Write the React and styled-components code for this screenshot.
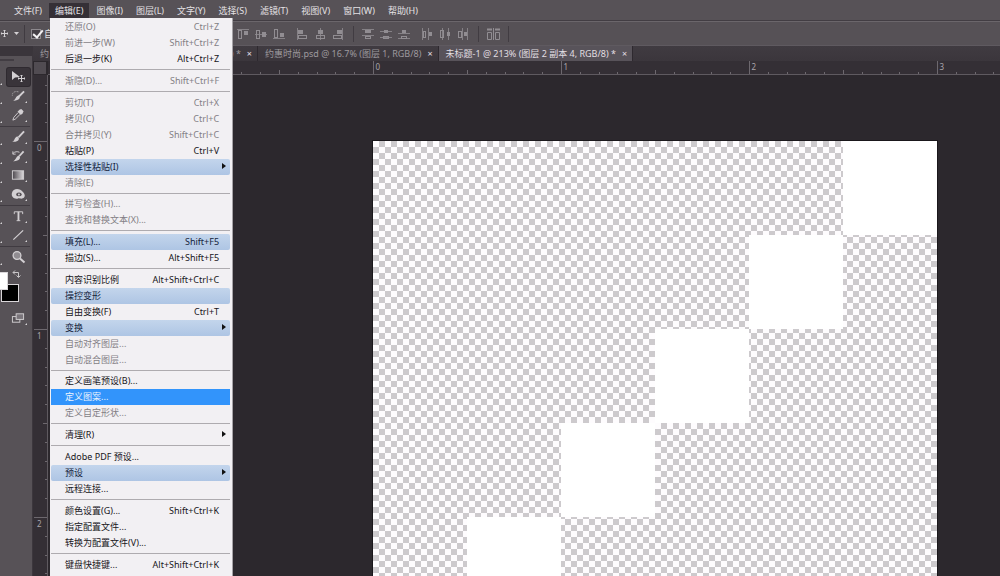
import React, { useEffect, useState } from 'react'
import styled, { createGlobalStyle, css } from 'styled-components'

const GlobalStyle = createGlobalStyle`
    * { box-sizing: border-box; }
    body {
        margin: 0;
        overflow: hidden;
        background-color: #2c282d;
        font-family: "Noto Sans", "Noto Sans CJK SC", sans-serif;
        font-size: 9px;
    }
    button {
        font: inherit;
        color: inherit;
        border: 0;
        padding: 0;
        background: none;
        text-align: left;
        white-space: nowrap;
    }
    svg { display: block; }
`

const Window = styled.div`
    display: flex;
    flex-direction: column;
    height: 100vh;
    overflow: hidden;
    color: #e4e1e4;
`

/* ---------- menu bar ---------- */

const MenuBar = styled.nav`
    display: flex;
    align-items: flex-start;
    gap: 1px;
    flex: none;
    height: 21px;
    padding: 3px 8px 0;
    background-color: #575257;
    border-bottom: 1px solid #423d43;
`

const MenuSlot = styled.div`
    position: relative;
`

const MenuTitle = styled.button`
    display: block;
    height: 15px;
    line-height: 15px;
    padding: 0 6px;
    font-size: 9px;
    background-color: ${({ $open }) => ($open ? '#353036' : 'transparent')};
`

const Dropdown = styled.ul`
    position: absolute;
    z-index: 10;
    top: 15px;
    left: 1px;
    width: 183px;
    margin: 0;
    padding: 1px 2px 8px 1px;
    list-style: none;
    background-color: #f2f0f3;
    border-right: 1px solid #a5a2a6;
`

const Divider = styled.li`
    height: ${({ $tight }) => ($tight ? '5px' : '6px')};
    padding-top: 2px;
    &::after {
        content: "";
        display: block;
        height: 1px;
        background-color: #aeabaf;
    }
`

const MenuRow = styled.button`
    display: flex;
    align-items: center;
    justify-content: space-between;
    width: 100%;
    height: 16px;
    line-height: 16px;
    padding: 0 11px 0 14px;
    color: #17151a;
    &:disabled {
        color: #837f85;
    }
    ${({ $look }) => $look === 'new' && css`
        color: #14243c;
        background: linear-gradient(#c3d5ec, #aec5e4);
        border-radius: 2px;
    `}
    ${({ $look }) => $look === 'active' && css`
        color: #eef5fd;
        background-color: #3294fb;
    `}
`

const Shortcut = styled.kbd`
    font-family: inherit;
    font-size: 9px;
`

const SubArrow = styled.i`
    margin: 0 -7px 3px 0;
    border: 3px solid transparent;
    border-left: 4px solid #111;
    border-right: 0;
`

/* ---------- options bar ---------- */

const OptionsBar = styled.div`
    display: flex;
    align-items: center;
    flex: none;
    height: 25px;
    background-color: #565156;
    border-top: 1px solid #6b666b;
    border-bottom: 1px solid #5f5a60;
`

const CurrentTool = styled.button`
    display: flex;
    align-items: center;
    gap: 5px;
    width: 25px;
    height: 18px;
    border-right: 1px solid #403b41;
`

const AutoSelect = styled.label`
    display: flex;
    align-items: center;
    gap: 3px;
    width: 207px;
    padding-left: 6px;
    overflow: hidden;
    white-space: nowrap;
`

const CheckBox = styled.input`
    appearance: none;
    flex: none;
    width: 10px;
    height: 10px;
    margin: 0;
    border: 1px solid #8d898e;
    background: #454046;
    &:checked::after {
        content: "";
        display: block;
        width: 4px;
        height: 8px;
        margin: -2px 0 0 3px;
        border: solid #f3f1f3;
        border-width: 0 2px 2px 0;
        transform: rotate(40deg);
    }
`

const IconGroup = styled.div`
    display: flex;
    gap: 6px;
    padding: 0 6px 0 5px;
    color: #918d92;
`

const IconButton = styled.button`
    width: 12px;
    height: 12px;
`

const BarLine = styled.span`
    width: 1px;
    height: 16px;
    margin: 0 3px;
    background-color: #413c42;
`

/* ---------- body ---------- */

const Body = styled.div`
    display: grid;
    grid-template-columns: 33px 1fr;
    flex: 1;
    min-height: 0;
`

const ToolBox = styled.aside`
    display: flex;
    flex-direction: column;
    background-color: #575257;
    border-top: 10px solid #3a353b;
    border-right: 1px solid #3c373d;
    padding-top: 3px;
`

const Grip = styled.div`
    width: 14px;
    height: 2px;
    margin-bottom: 7px;
    background-color: #423d43;
`

const ToolGroup = styled.div`
    display: flex;
    flex-direction: column;
    margin-right: 2px;
    & + & {
        margin-top: 1px;
        padding-top: 1px;
        border-top: 1px solid #403b41;
    }
`

const ToolRow = styled.div`
    display: flex;
    justify-content: space-between;
    height: 19px;
`

const Corner = styled.i`
    align-self: flex-end;
    margin-bottom: 2px;
    border: 1px solid #d6d3d6;
    border-left-color: transparent;
    border-top-color: transparent;
`

const ToolButton = styled.button`
    display: flex;
    align-items: center;
    justify-content: space-between;
    width: 23px;
    height: 18px;
    padding: 0 3px 0 4px;
    border-radius: 2px;
    color: #d3d0d3;
    ${({ $on }) => $on && css`
        background-color: #39343a;
        box-shadow: 0 0 0 1px #2f2a30;
    `}
`

const Swatches = styled.div`
    position: relative;
    height: 37px;
`

const SwapButton = styled.button`
    position: absolute;
    left: 12px;
    top: 3px;
    color: #c9c6c9;
`

const Swatch = styled.button`
    position: absolute;
    width: 18px;
    height: 18px;
    border: 1px solid #d9d6d9;
`

const BackSwatch = styled(Swatch)`
    left: 1px;
    top: 17px;
    background-color: #000;
`

const FrontSwatch = styled(Swatch)`
    left: -10px;
    top: 5px;
    background-color: #fff;
`

const ScreenMode = styled(ToolRow)`
    justify-content: flex-end;
    margin: 5px 2px 0 0;
`

const Editor = styled.main`
    display: grid;
    grid-template-columns: 15px 1fr;
    grid-template-rows: 15px 14px 1fr;
    min-width: 0;
    min-height: 0;
`

const Tabs = styled.div`
    grid-column: 1 / -1;
    display: flex;
    background: linear-gradient(#403b41, #3b363c);
`

const Tab = styled.div`
    display: flex;
    align-items: center;
    justify-content: space-between;
    gap: 6px;
    padding: 0 5px 0 7px;
    white-space: nowrap;
    border-right: 1px solid #2e292f;
    color: ${({ $on }) => ($on ? '#e2dfe2' : '#9d999e')};
    background-color: ${({ $on }) => ($on ? '#58535a' : 'transparent')};
    width: ${({ $width }) => $width};
`

const TabTitle = styled.button`
    display: flex;
    flex: 1;
    justify-content: space-between;
    line-height: 15px;
    white-space: pre;
`

const TabClose = styled.button`
    color: #e2dfe2;
    line-height: 15px;
`

const Origin = styled.div`
    margin: 1px 2px 1px 1px;
    background-color: #514c52;
`

const RulerTop = styled.div`
    overflow: hidden;
    background-color: #342f35;
    border-bottom: 1px solid #5f5a60;
`

const RulerSide = styled.div`
    overflow: hidden;
    background-color: #342f35;
    border-right: 1px solid #5f5a60;
`

const RulerDrawing = styled.svg`
    width: 100%;
    height: 100%;
    stroke: #6d686e;
    text {
        stroke: none;
        fill: #a9a5aa;
        font-size: 8px;
    }
`

const Workspace = styled.div`
    overflow: hidden;
    padding: 66px 0 0 325px;
    background-color: #2c282d;
`

const Artboard = styled.div`
    display: grid;
    grid-template-columns: repeat(6, 1fr);
    grid-auto-rows: 94px;
    width: 564px;
    background: repeating-conic-gradient(#fefcfe 0 25%, #cdcacd 0 50%) 6px 0 / 12px 12px;
    box-shadow: 0 0 0 1px #1a171b;
`

const Pixel = styled.div`
    grid-column: ${({ $col }) => $col};
    grid-row: ${({ $row }) => $row};
    background-color: #fff;
`

const menus = ['文件(F)', '编辑(E)', '图像(I)', '图层(L)', '文字(Y)', '选择(S)', '滤镜(T)', '视图(V)', '窗口(W)', '帮助(H)']

const editMenu = [
    [
        { label: '还原(O)', keys: 'Ctrl+Z', off: true },
        { label: '前进一步(W)', keys: 'Shift+Ctrl+Z', off: true },
        { label: '后退一步(K)', keys: 'Alt+Ctrl+Z' },
    ],
    [{ label: '渐隐(D)...', keys: 'Shift+Ctrl+F', off: true }],
    [
        { label: '剪切(T)', keys: 'Ctrl+X', off: true },
        { label: '拷贝(C)', keys: 'Ctrl+C', off: true },
        { label: '合并拷贝(Y)', keys: 'Shift+Ctrl+C', off: true },
        { label: '粘贴(P)', keys: 'Ctrl+V' },
        { label: '选择性粘贴(I)', sub: true, look: 'new' },
        { label: '清除(E)', off: true },
    ],
    [
        { label: '拼写检查(H)...', off: true },
        { label: '查找和替换文本(X)...', off: true },
    ],
    [
        { label: '填充(L)...', keys: 'Shift+F5', look: 'new' },
        { label: '描边(S)...', keys: 'Alt+Shift+F5' },
    ],
    [
        { label: '内容识别比例', keys: 'Alt+Shift+Ctrl+C' },
        { label: '操控变形', look: 'new' },
        { label: '自由变换(F)', keys: 'Ctrl+T' },
        { label: '变换', sub: true, look: 'new' },
        { label: '自动对齐图层...', off: true },
        { label: '自动混合图层...', off: true },
    ],
    [
        { label: '定义画笔预设(B)...' },
        { label: '定义图案...', look: 'active' },
        { label: '定义自定形状...', off: true },
    ],
    [{ label: '清理(R)', sub: true }],
    [
        { label: 'Adobe PDF 预设...' },
        { label: '预设', sub: true, look: 'new' },
        { label: '远程连接...' },
    ],
    [
        { label: '颜色设置(G)...', keys: 'Shift+Ctrl+K' },
        { label: '指定配置文件...' },
        { label: '转换为配置文件(V)...' },
    ],
    [{ label: '键盘快捷键...', keys: 'Alt+Shift+Ctrl+K' }],
]

// l, m = guide lines, o = outlined box, f = filled box; all as x y w h
const alignIcons = [
    [
        ['顶对齐', { l: [0, 1, 12, 1], o: [1, 2, 4, 9], f: [7, 3, 4, 4] }],
        ['垂直居中对齐', { l: [0, 6, 12, 1], o: [1, 2, 4, 9], f: [7, 4, 4, 5] }],
        ['底对齐', { l: [0, 10, 12, 1], o: [1, 1, 4, 9], f: [7, 5, 4, 4] }],
    ],
    [
        ['左对齐', { l: [1, 0, 1, 12], o: [2, 7, 9, 4], f: [2, 2, 5, 4] }],
        ['水平居中对齐', { l: [6, 0, 1, 12], o: [2, 7, 9, 4], f: [4, 2, 5, 4] }],
        ['右对齐', { l: [10, 0, 1, 12], o: [1, 7, 9, 4], f: [5, 2, 5, 4] }],
    ],
    [
        ['按顶分布', { l: [0, 1, 12, 1], m: [0, 7, 12, 1], o: [3, 8, 6, 3], f: [3, 2, 6, 3] }],
        ['垂直居中分布', { l: [0, 3, 12, 1], m: [0, 9, 12, 1], o: [3, 8, 6, 3], f: [4, 2, 4, 3] }],
        ['按底分布', { l: [0, 5, 12, 1], m: [0, 10, 12, 1], o: [3, 8, 6, 3], f: [4, 2, 4, 3] }],
    ],
    [
        ['按左分布', { l: [1, 0, 1, 12], m: [7, 0, 1, 12], o: [2, 3, 3, 7], f: [8, 4, 3, 4] }],
        ['水平居中分布', { l: [3, 0, 1, 12], m: [9, 0, 1, 12], o: [1, 2, 4, 8], f: [8, 4, 3, 4] }],
        ['按右分布', { l: [5, 0, 1, 12], m: [10, 0, 1, 12], o: [1, 3, 4, 7], f: [7, 4, 3, 4] }],
    ],
]

const rect = ([x, y, width, height]) => ({ x, y, width, height })

const AlignIcon = ({ l, m, o, f }) => (
    <svg width="12" height="12" fill="currentColor">
        <rect {...rect(l)} opacity=".8" />
        {m && <rect {...rect(m)} opacity=".8" />}
        <rect x={o[0] + 0.5} y={o[1] + 0.5} width={o[2] - 1} height={o[3] - 1} fill="none" stroke="currentColor" />
        <rect {...rect(f)} />
    </svg>
)

const MoveCross = () => (
    <svg width="9" height="9" viewBox="0 0 9 9" fill="none" stroke="#d3d0d3">
        <path d="M4.5 1v7M1 4.5h7M3.5 1.5h2M3.5 7.5h2M1.5 3.5v2M7.5 3.5v2" />
    </svg>
)

const toolDrawings = {
    move: <><path d="M1 1v9l3-2.600 5-.4z" fill="currentColor" stroke="none" /><path d="M10.500 5v7M7 8.500h7M9.500 5.500h2M9.500 11.500h2M7.500 7.500v2M13.500 7.500v2" /></>,
    quick: <><path d="M14 2L8.500 7.500" strokeWidth="2" /><path d="M2 12c3 0 3-5.500 6.500-5.500 2.500 2 0 6-6.500 5.500z" fill="currentColor" stroke="none" /><path d="M8 2.500C4 1.500 1 3 1.500 7" strokeDasharray="2 1" opacity=".6" /></>,
    dropper: <><path d="M9 1.500l2-1 2.500 2.500-1 2-2 2L7 3.500z" fill="currentColor" stroke="none" /><path d="M7.500 4.500L3 9.500 2 12.500l2.500-1L9.500 6.500" /></>,
    brush: <><path d="M14 1L8 7.500" strokeWidth="2" /><path d="M1 12c3 0 2.500-5 6-5.500 3.500 2.500.5 6.500-6 5.500z" fill="currentColor" stroke="none" /></>,
    history: <><path d="M13.500 2L9 7" strokeWidth="2" /><path d="M2 12.500c3 0 3-5 6.500-6 3 2.500 0 6.500-6.500 6z" fill="currentColor" stroke="none" /><path d="M2 4.500c2-2.500 5-2.500 7-1.500M2 2v3h3" /></>,
    gradient: <rect x="1.500" y="2.500" width="12" height="9" fill="url(#toolGradient)" />,
    sponge: <><path d="M1 6c1-5 8-6 12-1 3 3 2 7-2 7-2 0-2-1-4 0-4 0-7-2-6-6z" fill="currentColor" stroke="none" /><ellipse cx="8.500" cy="7.500" rx="3" ry="2" fill="#575257" stroke="none" /><circle cx="8.500" cy="7.500" r="1" fill="currentColor" stroke="none" /></>,
    text: <><path d="M3.500 5V2.500h9V5M6 12h4" /><path d="M8 2.500V12" strokeWidth="2" /></>,
    line: <path d="M2.500 12L13 2" strokeWidth="1.300" />,
    zoom: <><circle cx="6" cy="5.500" r="3.900" fill="#908c91" strokeWidth="1.300" /><path d="M9 8.500l4.500 4" strokeWidth="2" /></>,
    screen: <><rect x="1.500" y="5.500" width="8" height="6" /><rect x="5.500" y="2.500" width="8" height="6" fill="#7a757b" /></>,
}

const ToolIcon = ({ name }) => (
    <svg width="15" height="14" viewBox="0 0 15 14" fill="none" stroke="currentColor">
        {toolDrawings[name]}
    </svg>
)

const toolGroups = [
    [['move', '移动工具'], ['quick', '快速选择工具'], ['dropper', '吸管工具']],
    [['brush', '画笔工具'], ['history', '历史记录画笔工具'], ['gradient', '渐变工具'], ['sponge', '海绵工具']],
    [['text', '文字工具'], ['line', '直线工具']],
    [['zoom', '缩放工具']],
]

const INCH = 188
const tickSize = n => (n % 10 === 0 ? 13 : n % 5 === 0 ? 4 : 2)

const Ruler = ({ start, length, vertical }) => {
    const ticks = []
    for (let n = -20; start + (n * INCH) / 10 < length; n++) {
        ticks.push({ n, at: Math.round(start + (n * INCH) / 10) + 0.5, size: tickSize(n) })
    }
    return (
        <RulerDrawing>
            {ticks.map(({ n, at, size }) => (
                <g key={n}>
                    {vertical
                        ? <path d={`M14 ${at}h-${size}`} />
                        : <path d={`M${at} 13v-${size}`} />}
                    {n % 10 === 0 && n >= 0 && (
                        <text x={vertical ? 4 : at + 2} y={vertical ? at + 9 : 9}>{n / 10}</text>
                    )}
                </g>
            ))}
        </RulerDrawing>
    )
}

const useWindowSize = () => {
    const [size, setSize] = useState([window.innerWidth, window.innerHeight])
    useEffect(() => {
        const onResize = () => setSize([window.innerWidth, window.innerHeight])
        window.addEventListener('resize', onResize)
        return () => window.removeEventListener('resize', onResize)
    }, [])
    return size
}

const EditDropdown = () => (
    <Dropdown>
        {editMenu.map((section, i) => (
            <React.Fragment key={section[0].label}>
                {i > 0 && <Divider role="separator" $tight={editMenu[i - 1].length > 5} />}
                {section.map(({ label, keys, sub, look, off }) => (
                    <li key={label}>
                        <MenuRow type="button" disabled={off} $look={look}>
                            {label}
                            {keys && <Shortcut>{keys}</Shortcut>}
                            {sub && <SubArrow />}
                        </MenuRow>
                    </li>
                ))}
            </React.Fragment>
        ))}
    </Dropdown>
)

const AlignGroup = ({ icons }) => (
    <IconGroup>
        {icons.map(([title, shape]) => (
            <IconButton key={title} type="button" aria-label={title}><AlignIcon {...shape} /></IconButton>
        ))}
    </IconGroup>
)

export default function App() {
    const [width, height] = useWindowSize()

    return (
        <Window>
            <GlobalStyle />
            <MenuBar>
                {menus.map((title, i) => (
                    <MenuSlot key={title}>
                        <MenuTitle type="button" $open={i === 1}>{title}</MenuTitle>
                        {i === 1 && <EditDropdown />}
                    </MenuSlot>
                ))}
            </MenuBar>

            <OptionsBar>
                <CurrentTool type="button" aria-label="移动工具">
                    <MoveCross />
                    <svg width="5" height="3"><path d="M0 0h5L2.500 3z" fill="#d3d0d3" /></svg>
                </CurrentTool>
                <AutoSelect>
                    <CheckBox type="checkbox" defaultChecked />
                    自
                </AutoSelect>
                <AlignGroup icons={alignIcons[0]} />
                <AlignGroup icons={alignIcons[1]} />
                <BarLine />
                <AlignGroup icons={alignIcons[2]} />
                <AlignGroup icons={alignIcons[3]} />
                <BarLine />
                <IconGroup>
                    <IconButton type="button" aria-label="自动对齐图层">
                        <svg width="13" height="12" fill="none" stroke="currentColor">
                            <path d="M.5 4.500h4v7h-4zM8.500 4.500h4v7h-4zM6.500 0v12" />
                            <path d="M0 1.500h5M8 1.500h5" strokeWidth="2" />
                        </svg>
                    </IconButton>
                </IconGroup>
                <BarLine />
            </OptionsBar>

            <Body>
                <ToolBox>
                    <Grip />
                    <svg width="0" height="0">
                        <linearGradient id="toolGradient">
                            <stop stopColor="#4b464c" />
                            <stop offset="1" stopColor="#dedbde" />
                        </linearGradient>
                    </svg>
                    {toolGroups.map(group => (
                        <ToolGroup key={group[0][0]}>
                            {group.map(([name, title]) => (
                                <ToolRow key={name}>
                                    <Corner />
                                    <ToolButton type="button" aria-label={title} $on={name === 'move'}>
                                        <ToolIcon name={name} />
                                        {name !== 'move' && name !== 'zoom' && <Corner />}
                                    </ToolButton>
                                </ToolRow>
                            ))}
                        </ToolGroup>
                    ))}
                    <Swatches>
                        <SwapButton type="button" aria-label="切换前景色和背景色">
                            <svg width="9" height="8" viewBox="0 0 9 8" fill="none" stroke="currentColor">
                                <path d="M1 2.500h5.500V7M3 .5L1 2.500l2 2M4.500 5.500l2 2 2-2" />
                            </svg>
                        </SwapButton>
                        <BackSwatch type="button" aria-label="背景色" />
                        <FrontSwatch type="button" aria-label="前景色" />
                    </Swatches>
                    <ScreenMode>
                        <ToolButton type="button" aria-label="屏幕模式">
                            <ToolIcon name="screen" />
                            <Corner />
                        </ToolButton>
                    </ScreenMode>
                </ToolBox>

                <Editor>
                    <Tabs>
                        <Tab $width="225px">
                            <TabTitle type="button"><span>约</span><span>) *</span></TabTitle>
                            <TabClose type="button" aria-label="关闭">×</TabClose>
                        </Tab>
                        <Tab>
                            <TabTitle type="button">约惠时尚.psd @ 16.7% (图层 1, RGB/8)</TabTitle>
                            <TabClose type="button" aria-label="关闭">×</TabClose>
                        </Tab>
                        <Tab $on>
                            <TabTitle type="button">未标题-1 @ 213% (图层 2 副本 4, RGB/8) *</TabTitle>
                            <TabClose type="button" aria-label="关闭">×</TabClose>
                        </Tab>
                    </Tabs>
                    <Origin />
                    <RulerTop><Ruler start={325} length={width - 48} /></RulerTop>
                    <RulerSide><Ruler start={66} length={height - 75} vertical /></RulerSide>
                    <Workspace>
                        <Artboard>
                            {[6, 5, 4, 3, 2, 1].map((col, i) => (
                                <Pixel key={col} $col={col} $row={i + 1} />
                            ))}
                        </Artboard>
                    </Workspace>
                </Editor>
            </Body>
        </Window>
    )
}
